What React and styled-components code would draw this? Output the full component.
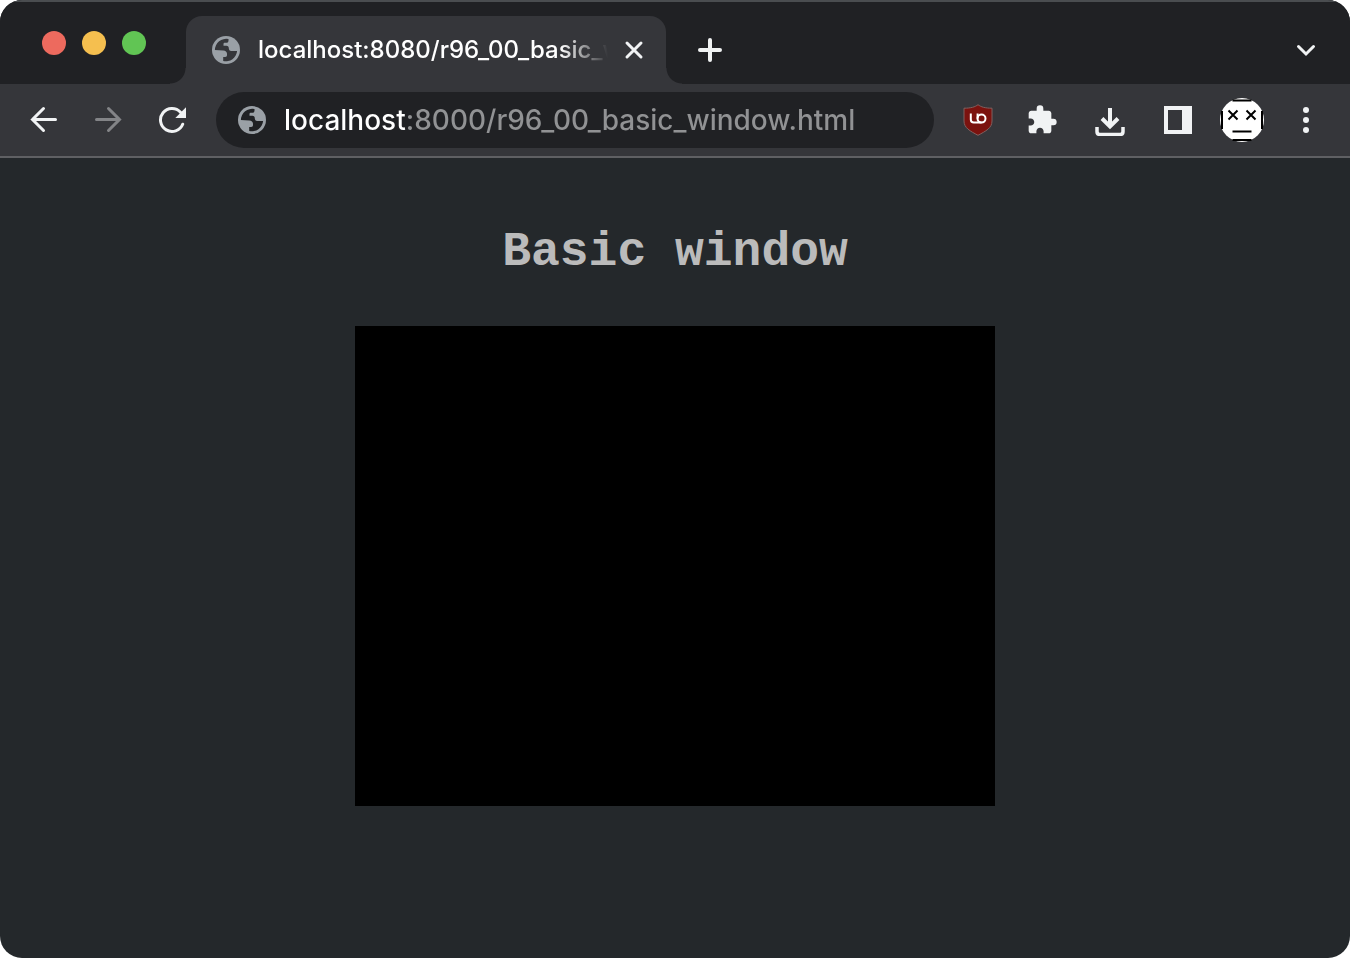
import React from "react";
import styled, { createGlobalStyle } from "styled-components";
import { MdExtension } from "react-icons/md";

const Global = createGlobalStyle`
  *, *::before, *::after { box-sizing: border-box; }
  html, body, #root { height: 100%; }
  body { margin: 0; background: #fff; font-family: Inter, "Liberation Sans", sans-serif; }
`;

const Window = styled.div`
  display: flex;
  flex-direction: column;
  min-height: 100%;
  border-radius: 22px;
  overflow: hidden;
  background: #24282b;
`;

const TabStrip = styled.header`
  display: flex;
  align-items: flex-end;
  height: 84px;
  background: #202124;
  border-top: 2px solid #4a4d50;
`;

const Lights = styled.div`
  display: flex;
  flex: none;
  align-self: center;
  gap: 16px;
  width: 186px;
  padding-left: 42px;
`;

const Light = styled.button`
  width: 24px;
  height: 24px;
  padding: 0;
  border: 0;
  border-radius: 50%;
  background: ${(p) => p.$color};
`;

const Tab = styled.div`
  position: relative;
  display: flex;
  align-items: center;
  flex: 0 1 480px;
  min-width: 0;
  height: 68px;
  padding: 0 18px 0 26px;
  border-radius: 16px 16px 0 0;
  background: #35363a;

  &::before,
  &::after {
    content: "";
    position: absolute;
    bottom: 0;
    width: 16px;
    height: 16px;
  }
  &::before {
    right: 100%;
    background: radial-gradient(circle at 0 0, #202124 15px, #35363a 16px);
  }
  &::after {
    left: 100%;
    background: radial-gradient(circle at 100% 0, #202124 15px, #35363a 16px);
  }
`;

const TabTitle = styled.span`
  flex: 1;
  min-width: 0;
  margin: 0 12px 0 18px;
  overflow: hidden;
  white-space: nowrap;
  font-size: 24px;
  font-weight: 500;
  line-height: 32px;
  color: #fff;
  mask-image: linear-gradient(90deg, #000 calc(100% - 48px), transparent);
`;

const IconButton = styled.button`
  display: flex;
  flex: none;
  align-items: center;
  justify-content: center;
  width: ${(p) => p.$width || 44}px;
  height: 44px;
  padding: 0;
  border: 0;
  background: none;
  color: #f1f3f4;

  &:disabled {
    color: #838487;
  }
`;

const StripButtons = styled.div`
  display: flex;
  flex: 1;
  justify-content: space-between;
  align-items: center;
  height: 68px;
  padding: 0 22px;
`;

const Toolbar = styled.nav`
  display: flex;
  align-items: center;
  height: 74px;
  padding: 0 22px;
  background: #35363a;
  border-bottom: 2px solid #5f6063;
`;

const Group = styled.div`
  display: flex;
  flex: none;
  align-items: center;
  gap: 20px;
`;

const AddressBar = styled.label`
  display: flex;
  flex: 1;
  align-items: center;
  gap: 18px;
  min-width: 0;
  height: 56px;
  margin: 0 22px;
  padding: 0 22px;
  border-radius: 28px;
  background: #202124;
`;

/* The host is bright, the port and path are dimmed. */
const Address = styled.input`
  flex: 1;
  min-width: 0;
  height: 40px;
  padding: 0;
  border: 0;
  outline: 0;
  font: 500 28px/40px Inter, "Liberation Sans", sans-serif;
  background: linear-gradient(90deg, #fff 122px, #919294 122px);
  background-clip: text;
  -webkit-text-fill-color: transparent;
`;

const Page = styled.main`
  display: flex;
  flex: 1;
  flex-direction: column;
  align-items: center;
  padding: 64px 16px;
`;

const Heading = styled.h1`
  margin: 0 0 44px;
  font: 700 48px/60px "Liberation Mono", monospace;
  color: #bbb;
`;

const Canvas = styled.canvas`
  width: 640px;
  max-width: 100%;
  aspect-ratio: 4 / 3;
  background: #000;
`;

const Svg = styled.svg`
  flex: none;
  fill: none;
`;

const Globe = ({ gap }) => (
  <Svg width="28" height="28" viewBox="0 0 28 28" aria-hidden="true">
    <circle cx="14" cy="14" r="14" fill="#9aa0a6" />
    <path
      fill={gap}
      d="M2.900 14A11.200 11.200 0 0 1 16.500 3.100V4.500C16.500 6 15.500 6.800 14.500 6.800H13C12 6.800 11.500 7.300 11.500 8V9.800H14.500C16 9.800 16.800 10.800 16.800 12.200C16.800 13.800 17.600 15 19.200 15H25.100A11.200 11.200 0 0 1 11.200 24.900V21H13.200C14.400 21 15 20.200 15 19V17.800C15 16 13.500 14.500 11.300 14.500Z"
    />
  </Svg>
);

const Stroke = ({ d, width = 3 }) => (
  <Svg
    width="28"
    height="28"
    viewBox="0 0 28 28"
    stroke="currentColor"
    strokeWidth={width}
    strokeLinecap="round"
    aria-hidden="true"
  >
    <path d={d} />
  </Svg>
);

const Reload = () => (
  <Svg width="28" height="28" viewBox="0 0 28 28" aria-hidden="true">
    <path d="M24.700 18.200A11.500 11.500 0 1 1 22.500 6.200" stroke="currentColor" strokeWidth="3" strokeLinecap="round" />
    <path d="M28 1.300V12H17.300Z" fill="currentColor" />
  </Svg>
);

const Shield = () => (
  <Svg width="30" height="32" viewBox="0 0 30 32" aria-hidden="true">
    <path
      d="M15 .7C12 3 8 4.200 1 4.200V17C1 24 7 27 15 31.300C23 27 29 24 29 17V4.200C22 4.200 18 3 15 .7Z"
      fill="#7b120e"
      stroke="#80605f"
    />
    <path d="M7.800 9.600V15.600A3 3 0 0 0 10.800 18.600H18.500M14.600 9.600V14.600" stroke="#fff" strokeWidth="2" />
    <circle cx="18.500" cy="14.600" r="4" stroke="#fff" strokeWidth="2" />
  </Svg>
);

const Download = () => (
  <Svg width="32" height="32" viewBox="0 0 32 32" stroke="currentColor" aria-hidden="true">
    <path d="M16 4V23" strokeWidth="4" />
    <path d="M8 14.500L16 22.500L24 14.500" strokeWidth="4" />
    <path d="M3 23V27.500Q3 30.500 6 30.500H26Q29 30.500 29 27.500V23" strokeWidth="3.500" />
  </Svg>
);

const SidePanel = () => (
  <Svg width="28" height="28" viewBox="0 0 28 28" aria-hidden="true">
    <path d="M0 0H28V28H0ZM4 4V24H18V4Z" fill="currentColor" fillRule="evenodd" />
  </Svg>
);

const Avatar = () => (
  <Svg width="44" height="44" viewBox="0 0 44 44" aria-hidden="true">
    <circle cx="22" cy="22" r="22" fill="#fff" />
    <path d="M12.500 2.500H31.500M12.500 42H31.500M2 13V31M42 13V31" stroke="#000" strokeWidth="2" />
    <path
      d="M8.500 12.500L17.500 21.500M17.500 12.500L8.500 21.500M26.500 12.500L35.500 21.500M35.500 12.500L26.500 21.500"
      stroke="#000"
      strokeWidth="2"
    />
    <path d="M12.500 33.500H31.500" stroke="#000" strokeWidth="2" />
  </Svg>
);

const Dots = () => (
  <Svg width="28" height="28" viewBox="0 0 28 28" aria-hidden="true">
    {[4, 14, 24].map((y) => (
      <circle key={y} cx="14" cy={y} r="3" fill="currentColor" />
    ))}
  </Svg>
);

export default function App() {
  return (
    <>
      <Global />
      <Window>
        <TabStrip>
          <Lights>
            <Light aria-label="Close window" $color="#ed6a5e" />
            <Light aria-label="Minimize window" $color="#f5bf4f" />
            <Light aria-label="Zoom window" $color="#61c554" />
          </Lights>
          <Tab>
            <Globe gap="#35363a" />
            <TabTitle>localhost:8080/r96_00_basic_window.html</TabTitle>
            <IconButton aria-label="Close tab" $width={28}>
              <Stroke d="M7 7L21 21M21 7L7 21" />
            </IconButton>
          </Tab>
          <StripButtons>
            <IconButton aria-label="New tab">
              <Stroke width={4} d="M14 4V24M4 14H24" />
            </IconButton>
            <IconButton aria-label="Search tabs">
              <Stroke d="M6.500 10.500L14 18L21.500 10.500" />
            </IconButton>
          </StripButtons>
        </TabStrip>
        <Toolbar>
          <Group>
            <IconButton aria-label="Back">
              <Stroke d="M25.500 13.500H2.500M13.500 2.500L2.500 13.500L13.500 24.500" />
            </IconButton>
            <IconButton aria-label="Forward" disabled>
              <Stroke d="M2.500 13.500H25.500M14.500 2.500L25.500 13.500L14.500 24.500" />
            </IconButton>
            <IconButton aria-label="Reload">
              <Reload />
            </IconButton>
          </Group>
          <AddressBar>
            <Globe gap="#202124" />
            <Address aria-label="Address" defaultValue="localhost:8000/r96_00_basic_window.html" />
          </AddressBar>
          <Group>
            <IconButton aria-label="uBlock Origin">
              <Shield />
            </IconButton>
            <IconButton aria-label="Extensions">
              <MdExtension size={32} />
            </IconButton>
            <IconButton aria-label="Downloads" $width={52}>
              <Download />
            </IconButton>
            <IconButton aria-label="Side panel">
              <SidePanel />
            </IconButton>
            <IconButton aria-label="Profile">
              <Avatar />
            </IconButton>
            <IconButton aria-label="Menu">
              <Dots />
            </IconButton>
          </Group>
        </Toolbar>
        <Page>
          <Heading>Basic window</Heading>
          <Canvas />
        </Page>
      </Window>
    </>
  );
}
